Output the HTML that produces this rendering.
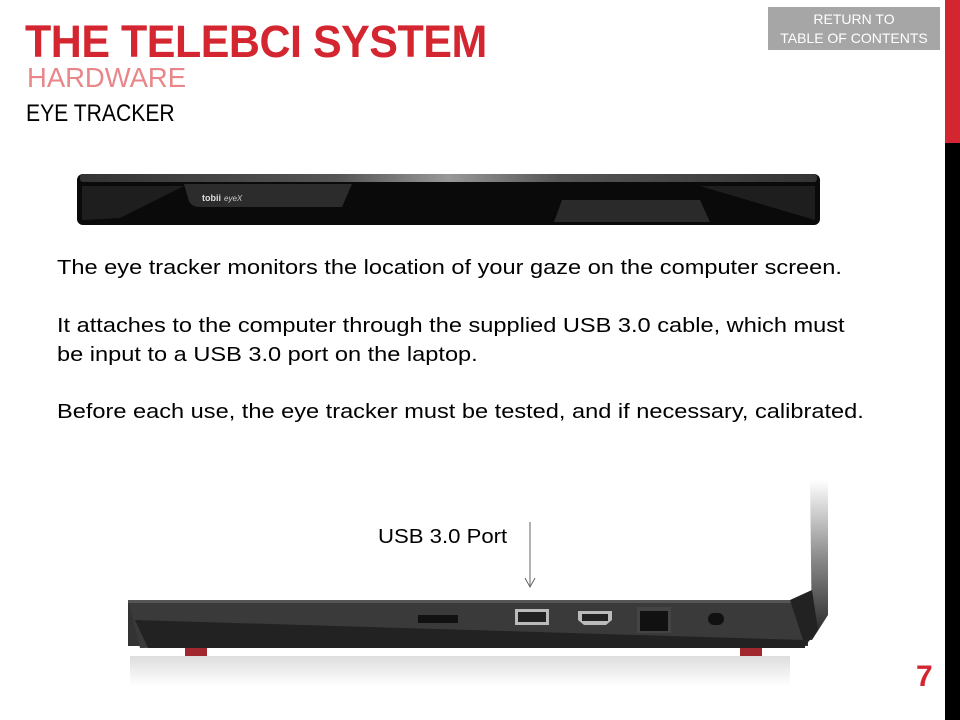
<!DOCTYPE html>
<html><head><style>
body{margin:0;width:960px;height:720px;position:relative;overflow:hidden;background:#fff;font-family:"Liberation Sans",sans-serif}
.a{position:absolute;white-space:nowrap}
.t{font-weight:bold;color:#d32630;font-size:45px;left:25px;top:16px;transform:scaleX(.955);transform-origin:left;letter-spacing:-0.5px}
.h{color:#e8868a;font-size:28px;left:27px;top:62px;transform:scaleX(.98);transform-origin:left}
.e{color:#000;font-size:24px;left:26px;top:100px;transform:scaleX(.88);transform-origin:left}
.p{font-size:20.5px;color:#000;left:57px;transform:scaleX(1.15);transform-origin:left}
</style></head><body>
<div style="position:absolute;left:945px;top:0;width:15px;height:143px;background:#d32630"></div>
<div style="position:absolute;left:945px;top:143px;width:15px;height:577px;background:#000"></div>
<div style="position:absolute;left:768px;top:7px;width:172px;height:43px;background:#a6a6a6;color:#fff;font-size:14px;text-align:center;line-height:19px;padding-top:3px;box-sizing:border-box">RETURN TO<br>TABLE OF CONTENTS</div>
<div class="a t">THE TELEBCI SYSTEM</div>
<div class="a h">HARDWARE</div>
<div class="a e">EYE TRACKER</div>
<svg class="a" style="left:0;top:0" width="960" height="720">
<defs><linearGradient id="lid" x1="0" y1="0" x2="0" y2="1"><stop offset="0" stop-color="#fff"/><stop offset=".5" stop-color="#888"/><stop offset="1" stop-color="#222"/></linearGradient>
<linearGradient id="sh" x1="0" y1="0" x2="0" y2="1"><stop offset="0" stop-color="#ddd"/><stop offset="1" stop-color="#fff"/></linearGradient>
<linearGradient id="top" x1="0" y1="0" x2="1" y2="0"><stop offset="0" stop-color="#333"/><stop offset=".35" stop-color="#555"/><stop offset=".5" stop-color="#999"/><stop offset=".65" stop-color="#555"/><stop offset="1" stop-color="#333"/></linearGradient></defs>
<rect x="77" y="174" width="743" height="51" rx="6" fill="#0a0a0a"/>
<rect x="80" y="174" width="737" height="8" rx="3" fill="url(#top)"/>
<path d="M82 186 L184 186 L120 218 L82 220 Z" fill="#1e1e1e"/>
<path d="M815 186 L700 186 L815 220 Z" fill="#1e1e1e"/>
<path d="M184 184 L352 184 L342 207 L200 207 Q190 207 188 198 Z" fill="#2c2c2c"/>
<path d="M562 200 L700 200 L710 222 L554 222 Z" fill="#2a2a2a"/>
<text x="202" y="201" fill="#ddd" font-size="9" font-weight="bold">tobii</text><text x="224" y="201" fill="#ccc" font-size="8" font-style="italic">eyeX</text>
<rect x="128" y="600" width="680" height="46" fill="#333"/>
<path d="M128 600 L800 600 Q815 602 812 640 L140 648 Z" fill="#3a3a3a"/>
<path d="M135 620 L805 640 L805 648 L148 648 Z" fill="#222"/>
<rect x="128" y="600" width="680" height="3" fill="#555"/>
<path d="M810 480 L828 480 L828 615 L812 640 Z" fill="url(#lid)"/>
<path d="M790 600 L812 590 L818 630 L805 646 Z" fill="#222"/>
<rect x="130" y="656" width="660" height="30" fill="url(#sh)"/>
<rect x="185" y="648" width="22" height="8" fill="#a0282e"/>
<rect x="740" y="648" width="22" height="8" fill="#a0282e"/>
<rect x="418" y="615" width="40" height="8" fill="#111"/>
<rect x="515" y="609" width="34" height="16" fill="#bbb"/><rect x="518" y="612" width="28" height="10" fill="#222"/>
<path d="M578 611 L612 611 L612 620 L606 625 L584 625 L578 620 Z" fill="#bbb"/><rect x="582" y="614" width="26" height="7" fill="#222"/>
<rect x="637" y="607" width="34" height="26" fill="#444"/><rect x="640" y="611" width="28" height="20" fill="#111"/>
<rect x="708" y="613" width="16" height="12" rx="6" fill="#111"/>
<line x1="530" y1="522" x2="530" y2="587" stroke="#666" stroke-width="1"/>
<path d="M525 578 L530 587 L535 578" fill="none" stroke="#666"/>
</svg>
<div class="a p" style="top:256px">The eye tracker monitors the location of your gaze on the computer screen.</div>
<div class="a p" style="top:314px">It attaches to the computer through the supplied USB 3.0 cable, which must</div>
<div class="a p" style="top:343px">be input to a USB 3.0 port on the laptop.</div>
<div class="a p" style="top:400px">Before each use, the eye tracker must be tested, and if necessary, calibrated.</div>
<div class="a" style="left:378px;top:525px;font-size:20.5px;transform:scaleX(1.08);transform-origin:left">USB 3.0 Port</div>
<div class="a" style="left:916px;top:660px;font-size:30px;font-weight:bold;color:#d32630">7</div>
</body></html>
